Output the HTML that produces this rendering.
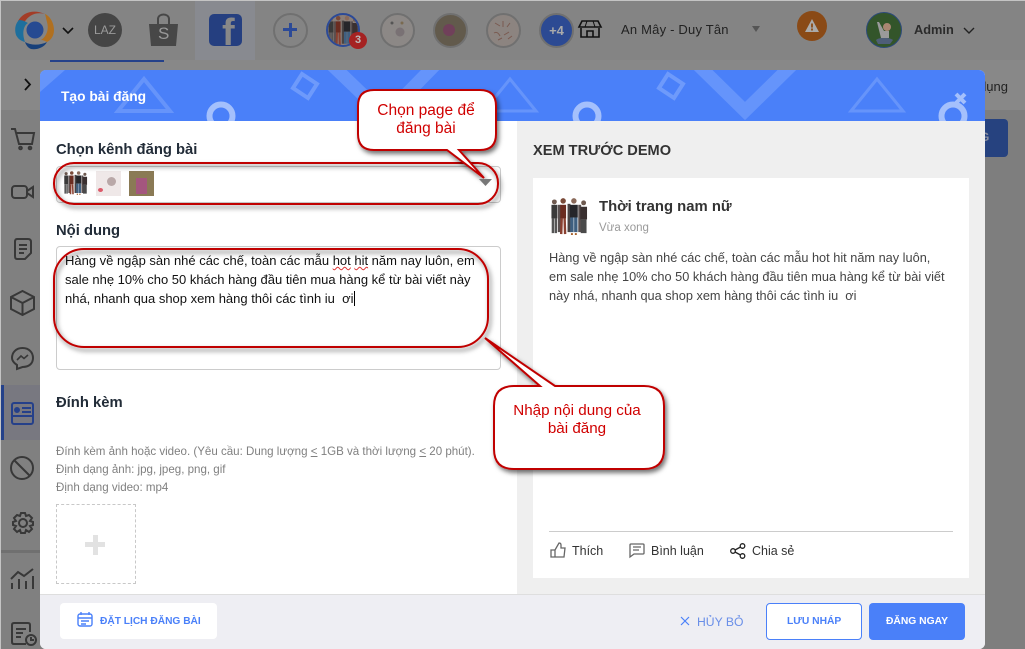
<!DOCTYPE html>
<html><head><meta charset="utf-8"><style>
html,body{margin:0;padding:0}
body{width:1025px;height:649px;overflow:hidden;position:relative;background:#7e7e7e;font-family:"Liberation Sans",sans-serif}
.a{position:absolute;white-space:nowrap}
svg{position:absolute;overflow:visible}
.h{font-weight:bold;font-size:14.8px;color:#222c38}
.ic{fill:none;stroke:#383838;stroke-width:2}
</style></head><body>
<div class="a" style="left:0;top:0;width:1025px;height:60px;background:#848484"></div>
<div class="a" style="left:0;top:60px;width:1025px;height:50px;background:#888"></div>
<div class="a" style="left:195px;top:1px;width:60px;height:59px;background:#888a90"></div>
<div class="a" style="left:50px;top:60px;width:114px;height:2px;background:#24418a"></div>
<div class="a" style="left:0;top:110px;width:40px;height:539px;background:#808080"></div>
<div class="a" style="left:1px;top:385px;width:39px;height:55px;background:#787880"></div>
<div class="a" style="left:1px;top:385px;width:3px;height:55px;background:#24418a"></div>
<div class="a" style="left:1px;top:550px;width:39px;height:3px;background:#707070"></div>
<div class="a" style="left:0;top:0;width:1025px;height:1px;background:#c4c4c4"></div>
<div class="a" style="left:0;top:0;width:1px;height:649px;background:#c4c4c4"></div>
<div class="a" style="left:985px;top:119px;width:23px;height:38px;background:#26427f;border-radius:0 4px 4px 0;overflow:hidden"><div class="a" style="left:-5px;top:11px;font-size:12px;font-weight:bold;color:#8a8fa0">G</div></div>
<div class="a" style="left:985px;top:79px;font-size:13px;color:#222;width:23px;overflow:hidden;text-align:right"><div style="float:right">dụng</div></div>

<svg width="0" height="0" style="left:0;top:0"><defs>
<symbol id="ppl" viewBox="0 0 40 40">
 <g fill="none">
 <path d="M10 8V36" stroke="#5a5050" stroke-width="3"/><path d="M20 7V36" stroke="#4a4444" stroke-width="3"/><path d="M31 8V36" stroke="#5a5050" stroke-width="3"/>
 <circle cx="5" cy="5" r="2.500" fill="#6e5a50"/><path d="M5 8V22" stroke="#3a3a3a" stroke-width="6"/><path d="M3.500 22V37M6.500 22V37" stroke="#555" stroke-width="2.500"/>
 <circle cx="14" cy="4" r="2.800" fill="#7a4a38"/><path d="M14 8V22" stroke="#6b2c20" stroke-width="6"/><path d="M12.500 22L12 38M15.500 22L16 38" stroke="#8a4030" stroke-width="2.500"/>
 <circle cx="25" cy="4" r="2.800" fill="#8a6a5a"/><path d="M25 8V21" stroke="#26262a" stroke-width="8"/><path d="M23 21V36M27 21V36" stroke="#3f5f80" stroke-width="3.500"/><path d="M22 38H24M26 38H28" stroke="#a65f2a" stroke-width="2"/>
 <circle cx="35" cy="6" r="2.500" fill="#6e5a50"/><path d="M35 10V23" stroke="#3a3030" stroke-width="7"/><path d="M33.500 23V37M36.500 23V37" stroke="#4a4a4a" stroke-width="3"/>
 </g>
</symbol>
<filter id="s" x="-20%" y="-20%" width="140%" height="150%"><feDropShadow dx="2" dy="3" stdDeviation="2.500" flood-color="#000" flood-opacity=".55"/></filter>
<clipPath id="cp"><circle cx="17" cy="17" r="15"/></clipPath>
</defs></svg>

<!-- top bar -->
<svg style="left:14px;top:9px" width="42" height="42" viewBox="0 0 42 42">
<circle cx="21" cy="21" r="8.500" fill="#264a92"/>
<path d="M4 12C9 3 20 0 31 5 23 3 15 5 10 14 8 13 6 12 4 12Z" fill="#a33d28"/>
<path d="M2 26C0 19 2 14 5 11 9 11 12 13 14 14 9 17 8 25 11 33 7 32 4 30 2 26Z" fill="#1e6f9d"/>
<path d="M31 5C36 7 40 14 40 21 40 27 37 31 33 33 31 32 29 31 27 31 33 27 35 20 33 13 32 10 32 8 31 5Z" fill="#b07020"/>
<path d="M11 33C18 37 27 36 33 33 30 39 22 41 17 40 14 39 12 36 11 33Z" fill="#17407a"/></svg>
<svg style="left:62px;top:27px" width="12" height="7"><path d="M1 1l5 5 5-5" fill="none" stroke="#111" stroke-width="1.600"/></svg>
<div class="a" style="left:88px;top:13px;width:34px;height:34px;border-radius:50%;background:#454545;color:#9a9a9a;font-size:12px;text-align:center;line-height:34px">LAZ</div>
<svg style="left:148px;top:13px" width="31" height="35"><path d="M1 11H30L28 33H3Z" fill="#474747"/><path d="M10 12V6C10 0 21 0 21 6V12" fill="none" stroke="#474747" stroke-width="2"/></svg>
<div class="a" style="left:158px;top:24px;font-size:17px;color:#999">S</div>
<div class="a" style="left:209px;top:14px;width:33px;height:32px;border-radius:5px;background:#253f80;overflow:hidden"><div class="a" style="left:13px;top:0;font-size:38px;font-weight:bold;color:#888;line-height:38px">f</div></div>
<div class="a" style="left:273px;top:13px;width:31px;height:31px;border:2px solid #707070;border-radius:50%"></div>
<div class="a" style="left:283px;top:28px;width:14px;height:3px;background:#2c4a97"></div>
<div class="a" style="left:288.500px;top:23px;width:3px;height:14px;background:#2c4a97"></div>
<svg style="left:326px;top:13px" width="36" height="36"><circle cx="17" cy="17" r="16" fill="#8a7e78" stroke="#2c4a97" stroke-width="2"/><g clip-path="url(#cp)"><use href="#ppl" x="1" y="2" width="32" height="32"/></g></svg>
<div class="a" style="left:349px;top:32px;width:18px;height:17px;border-radius:50%;background:#a52222;color:#bbb;font-size:11px;font-weight:bold;text-align:center;line-height:17px">3</div>
<div class="a" style="left:380px;top:13px;width:31px;height:31px;border:2px solid #707070;border-radius:50%;background:#8c8886"></div>
<svg style="left:380px;top:13px" width="35" height="35"><circle cx="20" cy="19" r="4.500" fill="#797174"/><circle cx="12" cy="10" r="1.500" fill="#555"/><circle cx="22" cy="10" r="1.500" fill="#7a6a50"/></svg>
<div class="a" style="left:433px;top:13px;width:31px;height:31px;border:2px solid #707070;border-radius:50%;background:#625a4c"></div>
<div class="a" style="left:443px;top:24px;width:12px;height:12px;background:#70405a;border-radius:50%"></div>
<div class="a" style="left:486px;top:13px;width:31px;height:31px;border:2px solid #707070;border-radius:50%;background:#8c8480"></div>
<svg style="left:486px;top:13px" width="35" height="35" fill="none" stroke="#7a5a50"><path d="M9 10l5 3M17 8v6M24 10l-3 4M8 20c3-2 5 1 6 3M18 22l5-3M22 26l4-3M12 27l4-2"/></svg>
<div class="a" style="left:539px;top:13px;width:31px;height:31px;border:2px solid #707070;border-radius:50%;background:#2c4a93;color:#aaa;font-size:13px;font-weight:bold;text-align:center;line-height:31px">+4</div>
<svg style="left:578px;top:20px" width="24" height="18"><path d="M4 1H20L23 7H1ZM3 8V17H21V8M9 17V11H15V17" fill="none" stroke="#111" stroke-width="1.600"/><path d="M9 1L7 7M15 1L17 7" stroke="#111"/></svg>
<div class="a" style="left:621px;top:22px;font-size:13px;color:#222;letter-spacing:.2px">An Mây - Duy Tân</div>
<svg style="left:751px;top:26px" width="10" height="7"><path d="M1 0H9L5 6Z" fill="#555"/></svg>
<div class="a" style="left:797px;top:11px;width:30px;height:30px;border-radius:50%;background:#8a4a16"></div>
<svg style="left:805px;top:19px" width="14" height="13"><path d="M7 0L14 13H0Z" fill="#aaa"/><path d="M7 4.500V8.500M7 9.500V11.500" stroke="#8a4a16" stroke-width="1.800"/></svg>
<svg style="left:866px;top:12px" width="36" height="36"><circle cx="18" cy="18" r="17.500" fill="#33552a" stroke="#2c4a7a"/><path d="M10 28c3-3 13-3 17 0l-3 4H12Z" fill="#4e5e78"/><path d="M15 26L11 10 13 10 18 19H23V26Z" fill="#9a9a9a"/><circle cx="21" cy="15" r="4" fill="#aa8672"/></svg>
<div class="a" style="left:914px;top:22px;font-size:12.800px;font-weight:bold;color:#2b2b2b">Admin</div>
<svg style="left:963px;top:27px" width="12" height="8"><path d="M1 1l5 5 5-5" fill="none" stroke="#222" stroke-width="1.400"/></svg>
<svg style="left:23px;top:77px" width="10" height="15"><path d="M2 2l5 5.500-5 5.500" fill="none" stroke="#111" stroke-width="1.800"/></svg>

<!-- sidebar icons -->
<svg class="ic" style="left:10px;top:128px" width="24" height="24"><path d="M1 1H5L9 16H22L24 5H6" stroke-width="2"/><circle cx="10.500" cy="20" r="1.300"/><circle cx="20" cy="20" r="1.300"/></svg>
<svg class="ic" style="left:11px;top:184px" width="24" height="16"><rect x="1" y="2" width="15" height="12" rx="3"/><path d="M16 7L22 3V13L16 9"/></svg>
<svg class="ic" style="left:13px;top:238px" width="20" height="22"><path d="M4 1H15Q18 1 18 4V15L12 21H4Q2 21 2 18V4Q2 1 4 1ZM6 7H14M6 11H14M6 15H11"/></svg>
<svg class="ic" style="left:10px;top:290px" width="25" height="26"><path d="M12.500 1L24 7V19L12.500 25 1 19V7ZM1 7L12.500 13 24 7M12.500 13V25"/></svg>
<svg class="ic" style="left:11px;top:347px" width="23" height="23"><path d="M11.500 1C18 1 22 5.500 22 11S18 20 11.500 20L6 22V18C3 16 1 14 1 11 1 5.500 5 1 11.500 1Z"/><path d="M6 13L10 9 13 11.500 17 8" stroke-width="1.600"/></svg>
<svg style="left:11px;top:402px;fill:none;stroke:#25408a;stroke-width:2" width="23" height="23"><rect x="1" y="1" width="21" height="21" rx="2"/><path d="M1 14H22M11 6H20M11 10H20"/><circle cx="6" cy="8" r="2" fill="#25408a"/></svg>
<svg class="ic" style="left:10px;top:456px" width="24" height="24"><circle cx="12" cy="12" r="11"/><path d="M4.500 4.500L19.500 19.500"/></svg>
<svg class="ic" style="left:12px;top:512px" width="22" height="22"><circle cx="11" cy="11" r="4"/><path d="M9 1H13L14 4 17 3 20 6 18 9 21 10V13L18 14 20 17 17 20 14 18 13 21H9L8 18 5 20 2 17 4 14 1 13V10L4 9 2 6 5 3 8 4Z"/></svg>
<svg class="ic" style="left:10px;top:568px" width="25" height="22"><path d="M1 11L8 4 14 8 23 1M2 15V21M9 11V21M16 13V21M23 8V21"/></svg>
<svg class="ic" style="left:11px;top:622px" width="25" height="25"><path d="M15 22H3Q1 22 1 20V3Q1 1 3 1H17Q19 1 19 3V10M5 7H15M5 11H12M5 15H10"/><circle cx="20" cy="18" r="5"/><path d="M20 15V18H23"/></svg>

<!-- modal -->
<div class="a" style="left:40px;top:70px;width:945px;height:579px;background:#fff;border-radius:6px;overflow:hidden">
  <div class="a" style="left:0;top:0;width:945px;height:51px;background:#4a80f9;overflow:hidden">
   <svg style="left:0;top:0" width="945" height="51" fill="none">
    <path d="M0 0H25L0 22Z" fill="#6594fb"/>
    <path d="M78 41L104 9 130 41Z" stroke="#6694fa" stroke-width="4"/>
    <circle cx="181" cy="46" r="11.500" stroke="#a4c0fc" stroke-width="6"/>
    <path d="M262 4L277 14 268 28 253 18Z" stroke="#6e9afb" stroke-width="4"/>
    <path d="M292 -5L345 46 395 -5" stroke="#6594fb" stroke-width="13"/>
    <path d="M444 41L470 9 496 41Z" stroke="#6694fa" stroke-width="3"/>
    <circle cx="547" cy="46" r="11.500" stroke="#a4c0fc" stroke-width="6"/>
    <path d="M628 4L643 14 634 28 619 18Z" stroke="#6e9afb" stroke-width="4"/>
    <path d="M655 -8L705 41 755 -8" stroke="#6594fb" stroke-width="13"/>
    <path d="M811 41L837 9 863 41Z" stroke="#6694fa" stroke-width="3"/>
    <circle cx="913" cy="46" r="11.500" stroke="#a4c0fc" stroke-width="6"/>
    <path d="M916 24L925 33M925 24L916 33" stroke="#a4c0fc" stroke-width="4"/>
   </svg>
  </div>
  <div class="a" style="left:21px;top:19px;font-size:13.800px;font-weight:bold;color:#fff">Tạo bài đăng</div>
  <div class="a" style="left:477px;top:51px;width:468px;height:474px;background:#efefef"></div>
  <div class="a" style="left:0;top:524px;width:945px;height:55px;background:#eeeef3;border-top:1px solid #dedede;box-sizing:border-box"></div>
</div>

<div class="a h" style="left:56px;top:142px">Chọn kênh đăng bài</div>
<div class="a" style="left:56px;top:166px;width:443px;height:35px;border:1px solid #ccc;border-radius:4px"></div>
<svg style="left:63px;top:170px" width="25" height="26"><use href="#ppl" width="25" height="26"/></svg>
<div class="a" style="left:96px;top:171px;width:25px;height:25px;background:#efe8e8"></div>
<div class="a" style="left:107px;top:177px;width:9px;height:9px;background:#b9a8a8;border-radius:50%"></div>
<div class="a" style="left:98px;top:188px;width:5px;height:4px;background:#dc5a6a;border-radius:50%"></div>
<div class="a" style="left:129px;top:171px;width:25px;height:25px;background:#8a7a55"></div>
<div class="a" style="left:136px;top:178px;width:11px;height:16px;background:#a4567e"></div>

<div class="a h" style="left:56px;top:223px">Nội dung</div>
<div class="a" style="left:56px;top:246px;width:443px;height:122px;border:1px solid #ccc;border-radius:4px"></div>
<div class="a" style="left:65px;top:251px;font-size:13px;line-height:19px;color:#111;letter-spacing:-.01px">Hàng về ngập sàn nhé các chế, toàn các mẫu <span style="text-decoration:underline wavy #d33 1px">hot</span> <span style="text-decoration:underline wavy #d33 1px">hit</span> năm nay luôn, em<br>sale nhẹ 10% cho 50 khách hàng đầu tiên mua hàng kể từ bài viết này<br>nhá, nhanh qua shop xem hàng thôi các tình iu&nbsp; ơi<span style="border-left:1px solid #000;margin-left:1px"></span></div>

<div class="a h" style="left:56px;top:395px">Đính kèm</div>
<div class="a" style="left:56px;top:443px;font-size:11.560px;line-height:18px;color:#808080">Đính kèm ảnh hoặc video. (Yêu cầu: Dung lượng <u>&lt;</u> 1GB và thời lượng <u>&lt;</u> 20 phút).<br>Định dạng ảnh: jpg, jpeg, png, gif<br>Định dạng video: mp4</div>
<div class="a" style="left:56px;top:504px;width:78px;height:78px;border:1px dashed #c8c8c8"></div>
<div class="a" style="left:85px;top:542px;width:20px;height:5px;background:#e2e2e2"></div>
<div class="a" style="left:93px;top:535px;width:5px;height:20px;background:#e2e2e2"></div>

<div class="a" style="left:60px;top:603px;width:157px;height:36px;background:#fff;border-radius:4px"></div>
<svg style="left:77px;top:612px;fill:none;stroke:#4a80f9;stroke-width:1.400" width="16" height="16"><rect x="1" y="2" width="14" height="12" rx="2"/><path d="M1 6H15M4 0V3M12 0V3M4 9H12M4 12H9"/></svg>
<div class="a" style="left:100px;top:616px;font-size:10.200px;font-weight:bold;color:#4a80f9">ĐẶT LỊCH ĐĂNG BÀI</div>

<div class="a" style="left:533px;top:143px;font-size:14.600px;font-weight:bold;color:#333">XEM TRƯỚC DEMO</div>
<div class="a" style="left:533px;top:178px;width:436px;height:400px;background:#fff"></div>
<svg style="left:549px;top:197px" width="40" height="39"><use href="#ppl" width="40" height="39"/></svg>
<div class="a" style="left:599px;top:199px;font-size:14.850px;font-weight:bold;color:#333">Thời trang nam nữ</div>
<div class="a" style="left:599px;top:222px;font-size:11.500px;color:#9a9a9a">Vừa xong</div>
<div class="a" style="left:549px;top:248px;font-size:12.750px;line-height:19px;color:#444">Hàng về ngập sàn nhé các chế, toàn các mẫu hot hit năm nay luôn,<br>em sale nhẹ 10% cho 50 khách hàng đầu tiên mua hàng kể từ bài viết<br>này nhá, nhanh qua shop xem hàng thôi các tình iu&nbsp; ơi</div>
<div class="a" style="left:549px;top:531px;width:404px;height:1px;background:#ccc"></div>
<svg style="left:550px;top:542px;fill:none;stroke:#666;stroke-width:1.300" width="16" height="16"><path d="M1 8H5V15H1ZM5 8L9 1Q11 1 11 3V6H15L14 15H5"/></svg>
<div class="a" style="left:572px;top:544px;font-size:12.500px;color:#333">Thích</div>
<svg style="left:629px;top:543px;fill:none;stroke:#666;stroke-width:1.300" width="16" height="15"><path d="M2 1H14Q15 1 15 2V10Q15 11 14 11H5L1 14V2Q1 1 2 1ZM4 4H12M4 7H10"/></svg>
<div class="a" style="left:651px;top:544px;font-size:12.500px;color:#333">Bình luận</div>
<svg style="left:730px;top:543px;fill:none;stroke:#222;stroke-width:1.300" width="16" height="16"><circle cx="3" cy="8" r="2.300"/><circle cx="12.500" cy="3" r="2.300"/><circle cx="12.500" cy="13" r="2.300"/><path d="M5 7L10.500 4M5 9L10.500 12"/></svg>
<div class="a" style="left:752px;top:544px;font-size:12.500px;color:#333">Chia sẻ</div>

<svg style="left:680px;top:616px" width="10" height="10"><path d="M1 1L9 9M9 1L1 9" stroke="#4a80f9" stroke-width="1.200"/></svg>
<div class="a" style="left:697px;top:615px;font-size:12.200px;color:#6a8fe8">HỦY BỎ</div>
<div class="a" style="left:766px;top:603px;width:94px;height:35px;background:#fff;border:1px solid #4a80f9;border-radius:4px"></div>
<div class="a" style="left:787px;top:616px;font-size:10.300px;font-weight:bold;color:#4a80f9">LƯU NHÁP</div>
<div class="a" style="left:869px;top:603px;width:96px;height:37px;background:#4a80f9;border-radius:4px"></div>
<div class="a" style="left:886px;top:616px;font-size:10.300px;font-weight:bold;color:#fff">ĐĂNG NGAY</div>

<!-- annotations -->
<svg style="left:0;top:0" width="1025" height="649" fill="none">
 <rect x="54" y="163" width="444" height="41" rx="20" stroke="#c00000" stroke-width="2" filter="url(#s)"/>
 <rect x="54" y="249" width="434" height="98" rx="30" stroke="#c00000" stroke-width="2" filter="url(#s)"/>
 <path d="M374 90H480Q496 90 496 106V134Q496 150 480 150H459L484 178 447 150H374Q358 150 358 134V106Q358 90 374 90Z" fill="#fff" stroke="#c00000" stroke-width="2" filter="url(#s)"/>
 <path d="M514 386H540L485 338 555 386H644Q664 386 664 406V449Q664 469 644 469H514Q494 469 494 449V406Q494 386 514 386Z" fill="#fff" stroke="#c00000" stroke-width="2" filter="url(#s)"/>
</svg>
<svg style="left:479px;top:179px" width="13" height="7"><path d="M0 0H13L6.500 7Z" fill="#777"/></svg>
<div class="a" style="left:358px;top:102px;width:136px;text-align:center;font-size:15.500px;line-height:18px;color:#d00000">Chọn page để<br>đăng bài</div>
<div class="a" style="left:494px;top:402px;width:166px;text-align:center;font-size:15.200px;line-height:18px;color:#d00000">Nhập nội dung của<br>bài đăng</div>
</body></html>
